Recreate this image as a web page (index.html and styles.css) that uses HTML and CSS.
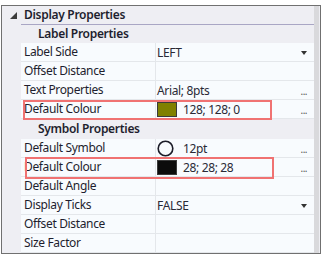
FILE: index.html
```html
<!DOCTYPE html>
<html lang="en">
<head>
  <meta charset="UTF-8" />
  <title>Display Properties</title>
  <link rel="stylesheet" href="styles.css">
</head>
<body>

  <div class="panel">
    <div class="grid">

      <div class="cat-head">
        <span class="expander">
          <svg width="7" height="7" viewBox="0 0 7 7"><polygon points="7,0 7,7 0,7" fill="#3c3c3c"/></svg>
        </span>
        <span class="cat-title">Display Properties</span>
      </div>

      <div class="sub-head">Label Properties</div>
      <div class="row">
        <div class="name">Label Side</div>
        <div class="value">LEFT<span class="drop"></span></div>
      </div>
      <div class="row">
        <div class="name">Offset Distance</div>
        <div class="value"></div>
      </div>
      <div class="row">
        <div class="name">Text Properties</div>
        <div class="value">Arial; 8pts<span class="more">...</span></div>
      </div>
      <div class="row">
        <div class="name">Default Colour</div>
        <div class="value"><span class="swatch olive"></span>128; 128; 0<span class="more">...</span></div>
      </div>

      <div class="sub-head tall">Symbol Properties</div>
      <div class="row">
        <div class="name">Default Symbol</div>
        <div class="value">
          <svg class="symbol" width="17" height="17" viewBox="0 0 17 17"><circle cx="8.5" cy="8.5" r="7.3" fill="none" stroke="#1c1c28" stroke-width="1.6"/></svg>12pt<span class="more">...</span>
        </div>
      </div>
      <div class="row">
        <div class="name">Default Colour</div>
        <div class="value"><span class="swatch black"></span>28; 28; 28<span class="more">...</span></div>
      </div>
      <div class="row">
        <div class="name">Default Angle</div>
        <div class="value"></div>
      </div>
      <div class="row">
        <div class="name">Display Ticks</div>
        <div class="value">FALSE<span class="drop"></span></div>
      </div>
      <div class="row">
        <div class="name">Offset Distance</div>
        <div class="value"></div>
      </div>
      <div class="row">
        <div class="name">Size Factor</div>
        <div class="value"></div>
      </div>

    </div>
    <div class="scrollbar"></div>

    <div class="mark mark-label"></div>
    <div class="mark mark-symbol"></div>
  </div>

</body>
</html>
```

FILE: styles.css
```css
body {
  margin: 0;
  background: #ffffff;
  font-family: "Noto Sans", "Open Sans", sans-serif;
  font-size: 12px;
  letter-spacing: -0.35px;
  color: #1e1e2e;
}
.panel {
  position: relative;
  display: flex;
  width: 320px;
  height: 249px;
  margin: 5px 0 0 1px;
  box-sizing: border-box;
  border: 1px solid #707070;
  background: #eeeef3;
  overflow: hidden;
}
.grid {
  flex: 1;
}
.scrollbar {
  width: 5px;
  margin-right: 1px;
  background: #d9d9dc;
}
.cat-head {
  display: flex;
  height: 19px;
}
.expander {
  width: 19px;
  display: flex;
  justify-content: center;
  align-items: center;
  padding-left: 3px;
  box-sizing: border-box;
}
.cat-title {
  flex: 1;
  padding-left: 3px;
  border-bottom: 1px solid #a9a6c4;
  font-weight: 600;
  font-size: 12px;
  line-height: 18px;
  letter-spacing: -0.3px;
}
.sub-head {
  height: 18px;
  line-height: 18px;
  padding-left: 36px;
  font-weight: 600;
  font-size: 12px;
  letter-spacing: -0.3px;
}
.sub-head.tall {
  height: 20px;
  line-height: 19px;
}
.row {
  display: flex;
  height: 19px;
  margin-left: 19px;
  box-sizing: border-box;
  border-bottom: 1px solid #e4e7eb;
  background: #f8fbfe;
}
.name {
  width: 135px;
  box-sizing: border-box;
  padding-left: 3px;
  border-right: 1px solid #e4e7eb;
  line-height: 18px;
  white-space: nowrap;
}
.value {
  flex: 1;
  display: flex;
  align-items: center;
  padding-left: 1px;
  position: relative;
  color: #2a2a36;
}
.swatch {
  width: 18px;
  height: 13px;
  border: 1px solid #3a3a3a;
  margin-right: 6px;
}
.olive {
  background: #808000;
}
.black {
  background: #0c0c0c;
}
.symbol {
  margin-right: 9px;
}
.more {
  position: absolute;
  right: 7px;
  top: 3px;
  font-size: 10px;
  color: #555;
  letter-spacing: -0.5px;
}
.drop {
  position: absolute;
  right: 7px;
  top: 8px;
  width: 0;
  height: 0;
  border-left: 3px solid transparent;
  border-right: 3px solid transparent;
  border-top: 4px solid #333;
}
.mark {
  position: absolute;
  border: 2px solid #f07272;
  box-sizing: border-box;
}
.mark-label {
  left: 21px;
  top: 94px;
  width: 249px;
  height: 20px;
}
.mark-symbol {
  left: 23px;
  top: 151px;
  width: 249px;
  height: 22px;
}
```
